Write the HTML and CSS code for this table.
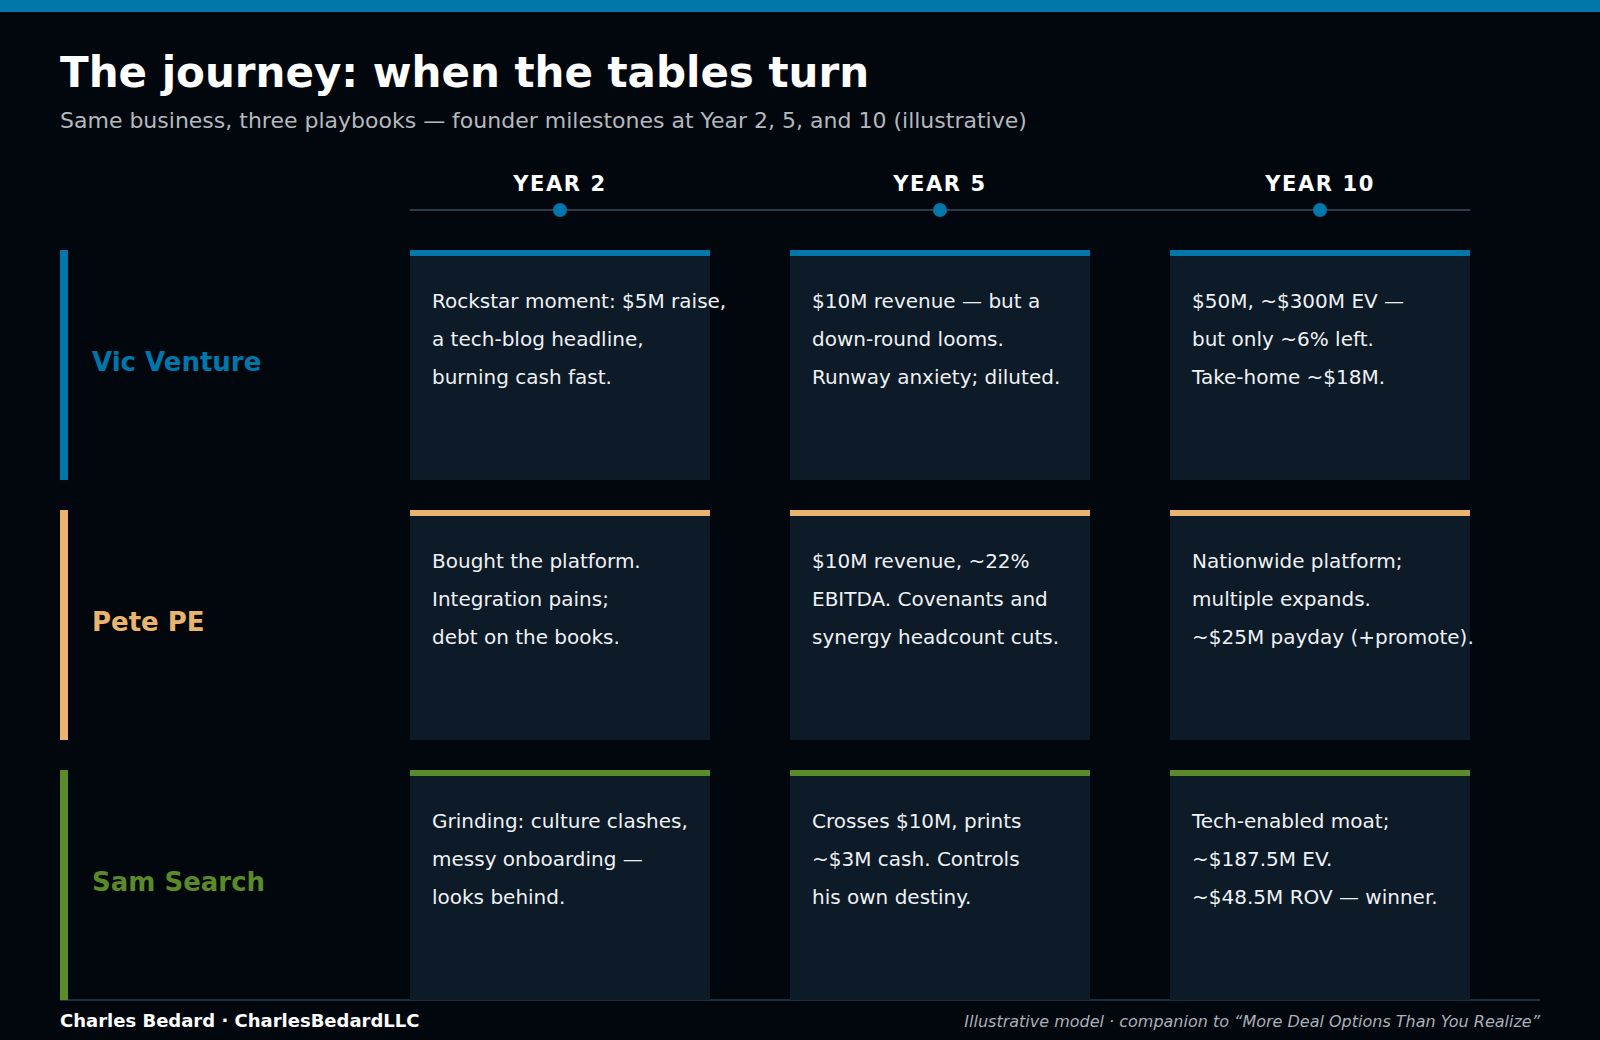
FILE: index.html
```html
<!DOCTYPE html>
<html lang="en">
<head>
<meta charset="utf-8">
<title>The journey: when the tables turn</title>
<link rel="stylesheet" href="styles.css">
</head>
<body>
<div class="topbar"></div>
<main class="page">
  <h1 class="title">The journey: when the tables turn</h1>
  <p class="subtitle">Same business, three playbooks — founder milestones at Year 2, 5, and 10 (illustrative)</p>

  <div class="header">
    <div class="spacer"></div>
    <div class="years">
      <div class="year">YEAR 2</div>
      <div class="year">YEAR 5</div>
      <div class="year">YEAR 10</div>
    </div>
  </div>
  <div class="header">
    <div class="spacer"></div>
    <div class="timeline">
      <span class="dot"></span>
      <span class="dot"></span>
      <span class="dot"></span>
    </div>
  </div>

  <div class="grid">
    <div class="label vc"><span class="name">Vic Venture</span></div>
    <div class="card vc">
      <div class="line">Rockstar moment: $5M raise,</div>
      <div class="line">a tech-blog headline,</div>
      <div class="line">burning cash fast.</div>
    </div>
    <div class="card vc">
      <div class="line">$10M revenue — but a</div>
      <div class="line">down-round looms.</div>
      <div class="line">Runway anxiety; diluted.</div>
    </div>
    <div class="card vc">
      <div class="line">$50M, ~$300M EV —</div>
      <div class="line">but only ~6% left.</div>
      <div class="line">Take-home ~$18M.</div>
    </div>

    <div class="label pe"><span class="name">Pete PE</span></div>
    <div class="card pe">
      <div class="line">Bought the platform.</div>
      <div class="line">Integration pains;</div>
      <div class="line">debt on the books.</div>
    </div>
    <div class="card pe">
      <div class="line">$10M revenue, ~22%</div>
      <div class="line">EBITDA. Covenants and</div>
      <div class="line">synergy headcount cuts.</div>
    </div>
    <div class="card pe">
      <div class="line">Nationwide platform;</div>
      <div class="line">multiple expands.</div>
      <div class="line">~$25M payday (+promote).</div>
    </div>

    <div class="label ss"><span class="name">Sam Search</span></div>
    <div class="card ss">
      <div class="line">Grinding: culture clashes,</div>
      <div class="line">messy onboarding —</div>
      <div class="line">looks behind.</div>
    </div>
    <div class="card ss">
      <div class="line">Crosses $10M, prints</div>
      <div class="line">~$3M cash. Controls</div>
      <div class="line">his own destiny.</div>
    </div>
    <div class="card ss">
      <div class="line">Tech-enabled moat;</div>
      <div class="line">~$187.5M EV.</div>
      <div class="line">~$48.5M ROV — winner.</div>
    </div>
  </div>

  <footer class="footer">
    <span class="credit">Charles Bedard · CharlesBedardLLC</span>
    <span class="note">Illustrative model · companion to “More Deal Options Than You Realize”</span>
  </footer>
</main>
</body>
</html>
```
FILE: styles.css
```css
* { box-sizing: border-box; }

html, body {
  margin: 0;
  padding: 0;
  background: #02070e;
  width: 1600px;
  height: 1040px;
  overflow: hidden;
  font-family: "DejaVu Sans", "Liberation Sans", sans-serif;
  color: #ffffff;
}

.topbar {
  height: 12px;
  background: #0077aa;
}

.page {
  padding: 0 60px;
}

.title {
  margin: 36px 0 0;
  font-size: 42px;
  line-height: 50px;
  font-weight: bold;
  color: #ffffff;
}

.subtitle {
  margin: 10px 0 0;
  font-size: 22px;
  line-height: 26px;
  color: #b4b9be;
}

.header {
  display: grid;
  grid-template-columns: 350px 1060px;
}

.years {
  display: grid;
  grid-template-columns: repeat(3, 300px);
  column-gap: 80px;
  margin-top: 38px;
}

.year {
  text-align: center;
  font-size: 21px;
  line-height: 24px;
  font-weight: bold;
  letter-spacing: 1.6px;
  color: #ffffff;
}

.timeline {
  display: grid;
  grid-template-columns: repeat(3, 300px);
  column-gap: 80px;
  height: 14px;
  margin-top: 7px;
  background: linear-gradient(#2b3b49, #2b3b49) no-repeat 0 6px / 100% 2px;
  align-items: center;
  justify-items: center;
}

.dot {
  width: 14px;
  height: 14px;
  border-radius: 50%;
  background: #0077aa;
}

.grid {
  display: grid;
  grid-template-columns: 270px repeat(3, 300px);
  grid-auto-rows: 230px;
  column-gap: 80px;
  row-gap: 30px;
  margin-top: 33px;
}

.label {
  display: flex;
  align-items: center;
  border-left: 8px solid;
  padding-left: 24px;
  padding-bottom: 6px;
}

.name {
  font-size: 26px;
  font-weight: bold;
}

.label.vc { border-left-color: #0077aa; color: #0077aa; }
.label.pe { border-left-color: #e9b56e; color: #e9b56e; }
.label.ss { border-left-color: #5b8a29; color: #5b8a29; }

.card {
  background: #0d1a27;
  border-top: 6px solid;
  padding: 26px 22px 0;
}

.card.vc { border-top-color: #0077aa; }
.card.pe { border-top-color: #e9b56e; }
.card.ss { border-top-color: #5b8a29; }

.line {
  font-size: 20px;
  line-height: 38px;
  white-space: nowrap;
  color: #eef1f4;
}

.footer {
  display: flex;
  justify-content: space-between;
  align-items: baseline;
  width: 1480px;
  border-top: 2px solid #1c2e3c;
  margin-top: -1px;
  padding-top: 10px;
}

.credit {
  font-size: 18px;
  line-height: 20px;
  font-weight: bold;
  color: #ffffff;
}

.note {
  font-size: 16px;
  line-height: 20px;
  font-style: italic;
  color: #a9b0b7;
}
```
